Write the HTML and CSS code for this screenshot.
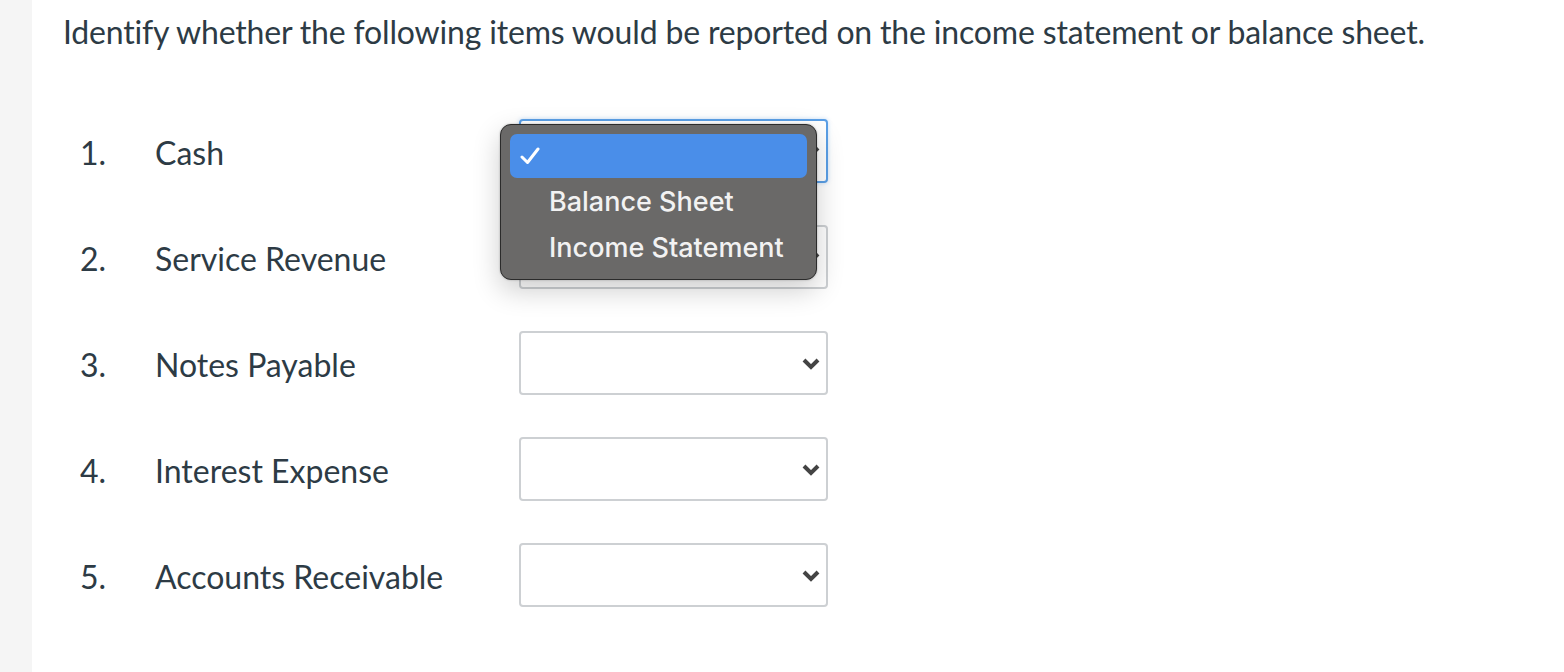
FILE: index.html
```html
<!DOCTYPE html>
<html lang="en">
<head>
    <meta charset="UTF-8">
    <title>Quiz Question</title>
    <link rel="stylesheet" href="styles.css">
</head>
<body>
    <div class="page">
        <div class="sidebar"></div>
        <div class="question">
            <p class="prompt">Identify whether the following items would be reported on the income statement or balance sheet.</p>
            <ol class="items">
                <li class="item">
                    <span class="num">1.</span>
                    <span class="label">Cash</span>
                    <div class="field">
                        <div class="select focused">
                            <svg class="chevron" width="18" height="12" viewBox="0 0 18 12"><path d="M2 2 L9 9 L16 2" fill="none" stroke="#444" stroke-width="4"/></svg>
                        </div>
                        <div class="menu">
                            <div class="option selected">
                                <svg class="check" width="20" height="18" viewBox="0 0 20 18"><path d="M2 10 L7.5 15.5 L18 2" fill="none" stroke="#fff" stroke-width="3" stroke-linecap="round" stroke-linejoin="round"/></svg>
                            </div>
                            <div class="option">Balance Sheet</div>
                            <div class="option">Income Statement</div>
                        </div>
                    </div>
                </li>
                <li class="item">
                    <span class="num">2.</span>
                    <span class="label">Service Revenue</span>
                    <div class="field">
                        <div class="select">
                            <svg class="chevron" width="18" height="12" viewBox="0 0 18 12"><path d="M2 2 L9 9 L16 2" fill="none" stroke="#444" stroke-width="4"/></svg>
                        </div>
                    </div>
                </li>
                <li class="item">
                    <span class="num">3.</span>
                    <span class="label">Notes Payable</span>
                    <div class="field">
                        <div class="select">
                            <svg class="chevron" width="18" height="12" viewBox="0 0 18 12"><path d="M2 2 L9 9 L16 2" fill="none" stroke="#444" stroke-width="4"/></svg>
                        </div>
                    </div>
                </li>
                <li class="item">
                    <span class="num">4.</span>
                    <span class="label">Interest Expense</span>
                    <div class="field">
                        <div class="select">
                            <svg class="chevron" width="18" height="12" viewBox="0 0 18 12"><path d="M2 2 L9 9 L16 2" fill="none" stroke="#444" stroke-width="4"/></svg>
                        </div>
                    </div>
                </li>
                <li class="item">
                    <span class="num">5.</span>
                    <span class="label">Accounts Receivable</span>
                    <div class="field">
                        <div class="select">
                            <svg class="chevron" width="18" height="12" viewBox="0 0 18 12"><path d="M2 2 L9 9 L16 2" fill="none" stroke="#444" stroke-width="4"/></svg>
                        </div>
                    </div>
                </li>
            </ol>
        </div>
    </div>
</body>
</html>
```

FILE: styles.css
```css
body {
    margin: 0;
    background-color: #fff;
    font-family: Lato, "Open Sans", sans-serif;
    color: #2d3b45;
}

.page {
    display: flex;
    height: 672px;
    overflow: hidden;
}

.sidebar {
    width: 32px;
    flex-shrink: 0;
    background-color: #f5f5f5;
}

.question {
    flex: 1;
    padding: 8px 0 0 31px;
}

.prompt {
    margin: 0;
    font-size: 32px;
    line-height: 48px;
    letter-spacing: -0.17px;
}

.items {
    list-style: none;
    margin: 42px 0 0 0;
    padding: 0;
}

.item {
    display: flex;
    align-items: center;
    height: 106px;
    font-size: 32px;
    line-height: 48px;
}

.num {
    width: 75px;
    padding-left: 17px;
    margin-top: 4px;
}

.label {
    width: 364px;
    margin-top: 4px;
}

.field {
    position: relative;
}

.select {
    width: 309px;
    height: 64px;
    box-sizing: border-box;
    border: 2px solid #cdd0d3;
    border-radius: 4px;
    background-color: #fff;
    display: flex;
    align-items: center;
    justify-content: flex-end;
    padding-right: 6px;
}

.select.focused {
    border-color: #5a9fe6;
    box-shadow: 0 0 4px rgba(90, 159, 230, 0.35);
}

.chevron {
    display: block;
    margin-top: 2px;
}

.menu {
    position: absolute;
    left: -19px;
    top: 5px;
    width: 317px;
    height: 156px;
    box-sizing: border-box;
    padding: 9px 9px 0 9px;
    background-color: #6a6968;
    border: 1.5px solid #2b2b2b;
    border-radius: 11px;
    box-shadow: 0 10px 28px rgba(0, 0, 0, 0.2), 0 0 2px rgba(0, 0, 0, 0.3);
    font-family: Inter, "Noto Sans", sans-serif;
    font-size: 27px;
    font-weight: 500;
    color: #f2f2f2;
    z-index: 2;
}

.option {
    height: 46px;
    line-height: 44px;
    padding-left: 39px;
}

.option.selected {
    height: 44px;
    margin-bottom: 2px;
    background-color: #4a8ee9;
    border-radius: 7px;
    position: relative;
}

.check {
    position: absolute;
    left: 10px;
    top: 13px;
}
```
